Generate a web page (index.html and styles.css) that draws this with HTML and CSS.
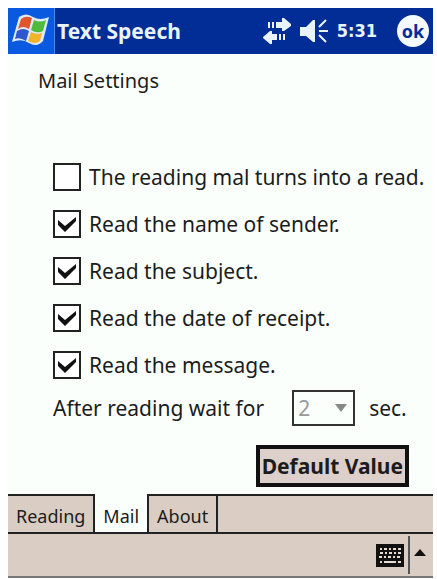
FILE: index.html
```html
<!DOCTYPE html>
<html lang="en">
<head>
    <meta charset="UTF-8">
    <meta name="viewport" content="width=device-width, initial-scale=1.0">
    <title>Text Speech</title>
    <link rel="stylesheet" href="styles.css">
</head>
<body>
    <header class="titlebar">
        <button type="button" class="start" aria-label="Start">
            <svg width="40" height="36" viewBox="0 0 40 36">
                <path d="M8 4Q15 -1 22 4Q29 8 38 4L32 28Q26 35 18 30Q11 25 1 29Z" fill="#dfeaf6"/>
                <path d="M10 6Q15 2 21 5L18 16Q12 12 7 16Z" fill="#e0562c"/>
                <path d="M23 7Q29 10 35 7L32 18Q26 21 20 17Z" fill="#4fbb3c"/>
                <path d="M6 18Q12 14 18 18L15 28Q9 24 4 26Z" fill="#2f56cf"/>
                <path d="M20 19Q25 22 31 20L29 28Q24 32 17 28Z" fill="#f2b32c"/>
            </svg>
        </button>
        <h1>Text Speech</h1>
        <div class="status">
            <svg class="sync" width="28" height="26" viewBox="0 0 28 26" fill="#e9f3fb">
                <path d="M5 4h2v6H5zM9 4h2v6H9zM13 4h6V0h2l7 6v2l-7 5h-2v-3h-6z"/>
                <path d="M22 16h-2v6h2zM18 16h-2v6h2zM14 16H9v-3H7l-7 6v1l7 6h2v-4h5z"/>
            </svg>
            <svg class="sound" width="30" height="26" viewBox="0 0 30 26">
                <path d="M1 9h6L14 2h2v22h-2l-7-6H1z" fill="#e9f3fb"/>
                <path d="M20 9l7-7M20 13h9M20 17l7 7" fill="none" stroke="#e9f3fb" stroke-width="2"/>
            </svg>
            <span class="time">5:31</span>
            <button type="button" class="ok">ok</button>
        </div>
    </header>

    <main class="settings">
        <h2>Mail Settings</h2>
        <form class="options">
            <label class="option"><input type="checkbox">The reading mal turns into a read.</label>
            <label class="option"><input type="checkbox" checked>Read the name of sender.</label>
            <label class="option"><input type="checkbox" checked>Read the subject.</label>
            <label class="option"><input type="checkbox" checked>Read the date of receipt.</label>
            <label class="option"><input type="checkbox" checked>Read the message.</label>
            <div class="wait">
                <label for="wait">After reading wait for</label>
                <select id="wait" disabled>
                    <option>2</option>
                </select>
                <span>sec.</span>
            </div>
            <button type="button" class="default">Default Value</button>
        </form>
    </main>

    <nav class="tabs">
        <a href="#reading">Reading</a>
        <a href="#mail" class="active">Mail</a>
        <a href="#about">About</a>
    </nav>

    <footer class="menubar">
        <button type="button" class="keyboard" aria-label="Keyboard">
            <svg width="28" height="23" viewBox="0 0 28 23">
                <path d="M0 0h28v23H0z" fill="#111"/>
                <path d="M4 5h2M8 5h3M13 5h2M17 5h3M22 5h3M4 9h3M9 9h2M13 9h3M18 9h2M22 9h3M3 13h3M8 13h2M12 13h3M17 13h2M21 13h3M4 18h2M8 18h12M22 18h3" stroke="#e6dcd4" stroke-width="2"/>
            </svg>
        </button>
        <button type="button" class="more" aria-label="Input options">
            <svg width="12" height="8" viewBox="0 0 12 8">
                <path d="M6 0l6 7H0z" fill="#111"/>
            </svg>
        </button>
    </footer>
</body>
</html>
```

FILE: styles.css
```css
* {
    box-sizing: border-box;
}

body {
    display: flex;
    flex-direction: column;
    min-height: 100vh;
    margin: 0;
    padding: 8px 4px 2px 8px;
    background: #fff;
    color: #1c1c1c;
    font-family: "Noto Sans", "Open Sans", sans-serif;
    font-size: 21px;
    line-height: 28px;
}

button {
    padding: 0;
    border: none;
    background: none;
    color: inherit;
    font: inherit;
}

svg {
    display: block;
}

/* Title bar */
.titlebar {
    display: flex;
    align-items: center;
    height: 46px;
    background: #022c96;
    color: #e9f3fb;
}

.start {
    display: flex;
    align-items: center;
    justify-content: center;
    width: 47px;
    height: 46px;
    border-right: 1px solid #3f8be8;
    background: #0a5ae0;
}

.titlebar h1 {
    flex-grow: 1;
    margin: 0 0 0 2px;
    font-size: 21px;
    font-weight: 700;
}

.status {
    display: flex;
    align-items: center;
    padding-right: 4px;
}

.sound {
    margin-left: 8px;
}

.time {
    margin: 0 20px 0 8px;
    font-family: "DejaVu Sans Condensed", "DejaVu Sans", sans-serif;
    font-size: 18px;
    font-weight: 700;
}

.ok {
    width: 32px;
    height: 32px;
    border-radius: 50%;
    background: #f4faff;
    color: #022c96;
    font-size: 18px;
    font-weight: 700;
}

/* Settings page */
.settings {
    flex-grow: 1;
    padding: 13px 8px 7px 30px;
    background: #fbfffb;
}

.settings h2 {
    margin: 0 0 68px;
    font-size: 20px;
    font-weight: 400;
}

.options {
    display: flex;
    flex-direction: column;
    gap: 19px;
    padding-left: 15px;
}

.option {
    display: flex;
    align-items: center;
    gap: 8px;
    white-space: nowrap;
}

.option input {
    appearance: none;
    flex-shrink: 0;
    width: 28px;
    height: 28px;
    margin: 0;
    border: 2px solid #222;
    background: #fff;
}

.option input:checked {
    background: url("data:image/svg+xml,%3Csvg xmlns='http://www.w3.org/2000/svg' viewBox='0 0 24 24'%3E%3Cpath d='M3 8l7 6L21 5v4L10 20 3 13z' fill='%23111'/%3E%3C/svg%3E") center / 24px 24px no-repeat #fff;
}

.wait {
    display: flex;
    align-items: center;
    margin-top: -8px;
    white-space: nowrap;
}

.wait select {
    appearance: none;
    width: 63px;
    height: 36px;
    margin: 0 14px 0 28px;
    padding: 0 4px;
    border: 2px solid #333;
    border-radius: 0;
    background: url("data:image/svg+xml,%3Csvg xmlns='http://www.w3.org/2000/svg' viewBox='0 0 12 8'%3E%3Cpath d='M0 0h12L6 8z' fill='%23888'/%3E%3C/svg%3E") right 6px center / 12px 8px no-repeat #fbfffb;
    color: #999;
    font: inherit;
    opacity: 1;
}

.default {
    align-self: flex-end;
    height: 42px;
    margin-right: 16px;
    padding: 0 2px;
    border: 4px solid #111;
    background: #ddcfc9;
    font-weight: 700;
}

/* Bottom tabs */
.tabs {
    display: flex;
    height: 40px;
    border-top: 2px solid #222;
    border-bottom: 2px solid #222;
    background: #d9cdc4;
}

.tabs a {
    padding: 6px 8px;
    border-right: 2px solid #222;
    color: #1c1c1c;
    font-size: 18px;
    text-decoration: none;
}

.tabs .active {
    margin-top: -2px;
    padding: 8px 8px 4px;
    background: #fbfffb;
}

.menubar {
    display: flex;
    align-items: center;
    justify-content: flex-end;
    height: 44px;
    border-bottom: 2px solid #777;
    background: #d9cdc4;
}

.keyboard {
    padding-right: 4px;
}

.more {
    display: flex;
    align-items: center;
    height: 38px;
    padding: 0 7px 4px 4px;
    border-left: 2px solid #555;
}
```
